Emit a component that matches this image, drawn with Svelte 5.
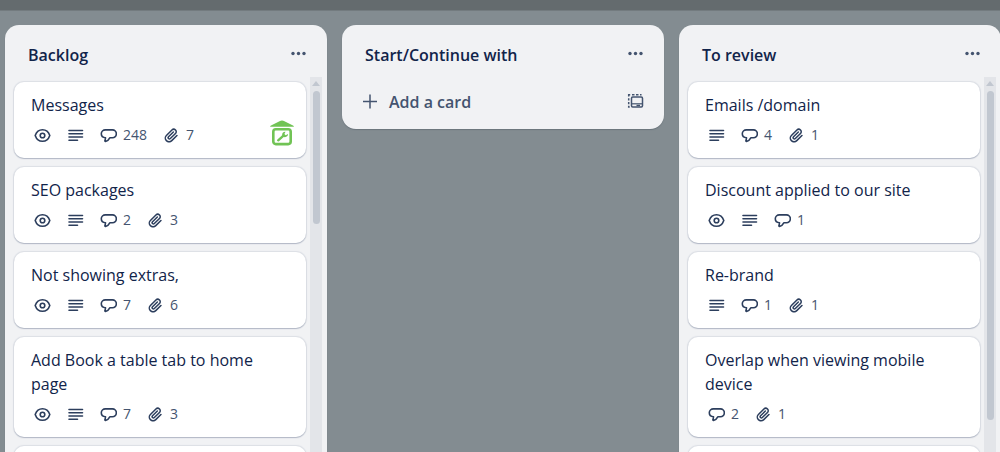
<script lang="ts">
  interface Card {
    title: string;
    watching?: boolean;
    description?: boolean;
    comments?: number;
    attachments?: number;
    logo?: boolean;
  }

  interface List {
    name: string;
    cards: Card[];
    thumb?: number;
  }

  const lists: List[] = $state([
    {
      name: 'Backlog',
      thumb: 133,
      cards: [
        { title: 'Messages', watching: true, description: true, comments: 248, attachments: 7, logo: true },
        { title: 'SEO packages', watching: true, description: true, comments: 2, attachments: 3 },
        { title: 'Not showing extras,', watching: true, description: true, comments: 7, attachments: 6 },
        { title: 'Add Book a table tab to home page', watching: true, description: true, comments: 7, attachments: 3 },
        { title: '' },
      ],
    },
    { name: 'Start/Continue with', cards: [] },
    {
      name: 'To review',
      thumb: 329,
      cards: [
        { title: 'Emails /domain', description: true, comments: 4, attachments: 1 },
        { title: 'Discount applied to our site', watching: true, description: true, comments: 1 },
        { title: 'Re-brand', description: true, comments: 1, attachments: 1 },
        { title: 'Overlap when viewing mobile device', comments: 2, attachments: 1 },
        { title: '' },
      ],
    },
  ]);
</script>

<div class="page">
  <header class="topbar"></header>
  <main class="board">
    {#each lists as list}
      <section class="list">
        <div class="list-header">
          <h2>{list.name}</h2>
          <button class="icon-btn" aria-label="List actions">
            <svg width="17" height="17" viewBox="0 0 17 17" fill="currentColor">
              <circle cx="3" cy="8.5" r="1.7" />
              <circle cx="8.5" cy="8.5" r="1.7" />
              <circle cx="14" cy="8.5" r="1.7" />
            </svg>
          </button>
        </div>

        {#if list.cards.length}
          <div class="list-body">
            <div class="cards">
              {#each list.cards as card}
                <article class="card">
                  <h3>{card.title}</h3>
                  <div class="badges">
                    {#if card.watching}
                      <span class="badge">
                        <svg class="icon" viewBox="0 0 17 17">
                          <path d="M1.2 8.5C2.4 5 5 2.7 8.5 2.7s6.1 2.3 7.3 5.8c-1.2 3.5-3.8 5.8-7.3 5.8S2.4 12 1.2 8.5z" />
                          <circle cx="8.5" cy="8.5" r="2.3" />
                        </svg>
                      </span>
                    {/if}
                    {#if card.description}
                      <span class="badge">
                        <svg class="icon" viewBox="0 0 17 17">
                          <path d="M2 3.5h13.5M2 6.7h13.5M2 10h13.5M2 13.3h8.5" />
                        </svg>
                      </span>
                    {/if}
                    {#if card.comments}
                      <span class="badge">
                        <svg class="icon" viewBox="0 0 17 17">
                          <path d="M5.4 2.9h7a3.9 3.9 0 0 1 0 7.9H9.8c-1 2-2.6 3.2-4.3 3.6-.4.1-.6-.2-.5-.6l.5-3c-2.5-.2-4.2-1.7-4.2-4 0-2.200 1.800-3.900 4.100-3.900z" />
                        </svg>
                        {card.comments}
                      </span>
                    {/if}
                    {#if card.attachments}
                      <span class="badge">
                        <svg class="icon solid" viewBox="1 1 22 22">
                          <path d="M11.643 17.965c-1.53 1.495-4.016 1.496-5.542.004a3.773 3.773 0 0 1 .002-5.412l7.147-6.985a2.316 2.316 0 0 1 3.233-.003c.893.873.895 2.282.004 3.153l-6.703 6.55a.653.653 0 0 1-.914-.008.62.62 0 0 1 0-.902l6.229-6.087a.941.941 0 0 0 0-1.353.995.995 0 0 0-1.384 0l-6.23 6.087a2.502 2.502 0 0 0 0 3.607 2.643 2.643 0 0 0 3.683.01l6.703-6.55c1.66-1.623 1.658-4.239-.004-5.862a4.307 4.307 0 0 0-6 .002l-7.148 6.985a5.655 5.655 0 0 0-.002 8.119c2.291 2.239 6.018 2.237 8.31-.005l6.712-6.559a.941.941 0 0 0 0-1.353.995.995 0 0 0-1.384 0z" />
                        </svg>
                        {card.attachments}
                      </span>
                    {/if}
                  </div>
                  {#if card.logo}
                    <svg class="logo" width="24" height="26" viewBox="0 0 24 26">
                      <path d="M0 6.8q.2-1.200 2-1.800L9.500 1.200Q12 0 14.500 1.200L22 5q1.800.6 2 1.800z" fill="#71c355" />
                      <rect x="3.3" y="9.3" width="17.4" height="14.8" rx="2.5" fill="#fff" stroke="#71c355" stroke-width="2.6" />
                      <path d="M8.2 20.3l5-4.500" stroke="#71c355" stroke-width="2.4" stroke-linecap="round" />
                      <path d="M15.5 11.8c-2-.3-3.8 1.500-3.300 3.500s3.500 2.600 5.200.8c.5-.6.7-1.300.6-2l-2.300 1.200-1.300-1.300z" fill="#71c355" />
                    </svg>
                  {/if}
                </article>
              {/each}
            </div>
            <div class="scrollbar">
              <div class="arrow"></div>
              <div class="thumb" style="height: {list.thumb}px"></div>
            </div>
          </div>
        {:else}
          <div class="list-footer">
            <button class="add-card">
              <svg width="17" height="17" viewBox="0 0 17 17" fill="none" stroke="currentColor" stroke-width="1.5">
                <path d="M8 .5v14M1 7.500h14" />
              </svg>
              Add a card
            </button>
            <button class="icon-btn" aria-label="Create from template">
              <svg width="17" height="17" viewBox="0 0 17 17" fill="none" stroke="currentColor" stroke-width="1.5">
                <rect x="4.5" y="4" width="11" height="10" rx="1.2" />
                <path d="M4.5 10.8h11" stroke-width="1.2" />
                <path d="M9.5 12.500h3.500" stroke-width="1.5" />
                <path d="M1.7 3.500V1.700h1.500M5 1.700h2.500M9 1.700h2.500M13 1.700h.8v.8M1.700 5.200v2.300M1.700 9v2.300M1.700 12.700V14h1" />
              </svg>
            </button>
          </div>
        {/if}
      </section>
    {/each}
  </main>
</div>

<style>
  :global(body) {
    margin: 0;
  }

  .page {
    display: flex;
    flex-direction: column;
    height: 100vh;
    overflow: hidden;
    background: #838c91;
    color: #11244a;
    font-family: 'Segoe UI', 'Open Sans', 'Noto Sans', sans-serif;
  }

  .topbar {
    flex: none;
    height: 10px;
    background: #646b6e;
    border-bottom: 1px solid #737b7f;
  }

  .board {
    display: flex;
    flex: 1;
    align-items: flex-start;
    gap: 15px;
    min-height: 0;
    padding: 14px 5px 0;
  }

  .list {
    flex: none;
    width: 322px;
    border-radius: 14px;
    background: #f1f2f4;
    box-shadow: 0 1px 1px #6b757c;
  }

  .list-header {
    display: flex;
    align-items: center;
    justify-content: space-between;
    height: 52px;
    padding: 0 20px 0 23px;
    box-sizing: border-box;
  }

  h2 {
    margin: 8px 0 0;
    font-size: 16px;
    line-height: 24px;
    font-weight: 600;
  }

  h3 {
    margin: 0;
    font-size: 16px;
    line-height: 24px;
    font-weight: 400;
  }

  button {
    border: 0;
    padding: 0;
    background: none;
    color: #44546f;
    font: inherit;
    cursor: pointer;
  }

  .icon-btn {
    display: flex;
    margin-top: 4px;
  }

  .list-body {
    display: flex;
    gap: 4px;
    padding: 0 5px 0 9px;
  }

  .cards {
    display: flex;
    flex: 1;
    flex-direction: column;
    gap: 9px;
    min-width: 0;
    padding-top: 5px;
  }

  .card {
    position: relative;
    min-height: 76px;
    padding: 11px 17px 13px;
    box-sizing: border-box;
    border-radius: 10px;
    background: #fff;
    box-shadow: 0 1px 1px #b3b9c6, 0 0 1px 1px #dcdfe5;
  }

  .badges {
    display: flex;
    gap: 16px;
    height: 20px;
    margin-top: 8px;
    padding-left: 3px;
    color: #44546f;
    font-size: 14px;
    line-height: 20px;
  }

  .badge {
    display: flex;
    align-items: center;
    gap: 6px;
  }

  .icon {
    width: 17px;
    height: 17px;
    fill: none;
    stroke: #2c3e5d;
    stroke-width: 1.6;
    stroke-linecap: round;
    stroke-linejoin: round;
  }

  .icon.solid {
    fill: #2c3e5d;
    stroke: none;
  }

  .logo {
    position: absolute;
    right: 12px;
    bottom: 12px;
  }

  .scrollbar {
    display: flex;
    flex-direction: column;
    align-items: center;
    gap: 5px;
    width: 12px;
    padding-top: 4px;
    background: #e3e5e9;
  }

  .arrow {
    border: 4px solid transparent;
    border-top-width: 0;
    border-bottom: 5px solid #c1c7d0;
  }

  .thumb {
    width: 7px;
    border-radius: 4px;
    background: #c1c7d0;
  }

  .list-footer {
    display: flex;
    align-items: flex-start;
    justify-content: space-between;
    padding: 13px 20px 15px;
  }

  .list-footer .icon-btn {
    margin: 3px 0 0;
  }

  .add-card {
    display: flex;
    align-items: center;
    gap: 10px;
    font-size: 16px;
    line-height: 24px;
    font-weight: 600;
  }
</style>
